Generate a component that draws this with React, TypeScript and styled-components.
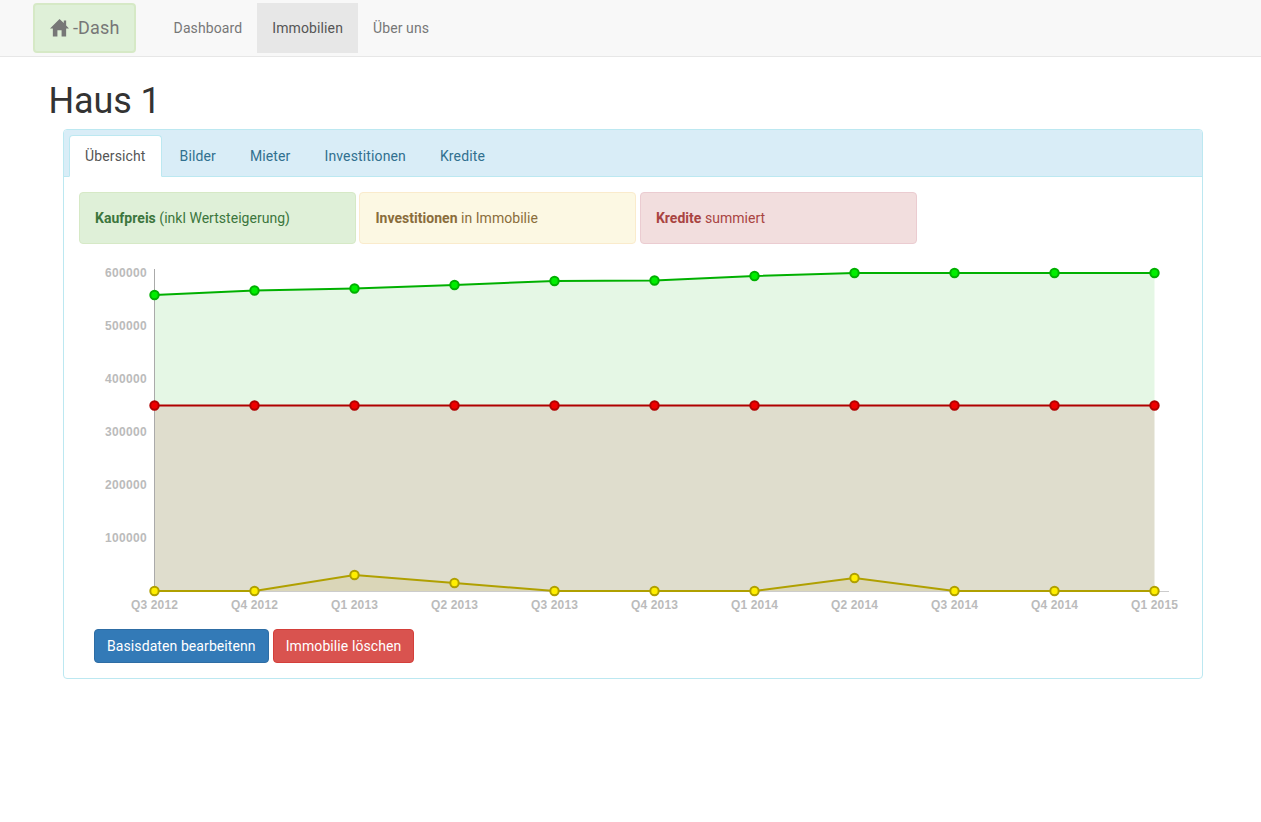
import React from 'react';
import styled, { createGlobalStyle } from 'styled-components';

const Global = createGlobalStyle`
  html, body { margin: 0; padding: 0; background: #fff; }
  body { font-family: Roboto, "Liberation Sans", sans-serif; font-size: 14px; line-height: 20px; color: #333; }
`;
const Navbar = styled.nav`
  box-sizing: border-box; height: 57px; background: #f8f8f8; border-bottom: 1px solid #e7e7e7;
  display: flex; align-items: flex-start; padding: 3px 0 0 33px;
`;
const Brand = styled.a`
  box-sizing: border-box; width: 103px; height: 50px; background: #dff0d8; border: 2px solid #d6e9c6; border-radius: 4px;
  display: flex; align-items: center; padding-left: 15px; color: #777; font-size: 18px; letter-spacing: 0.15px; margin-right: 22.6px;
  svg { margin-right: 4px; margin-top: -2px; flex: none; }
`;
const NavList = styled.div`display: flex;`;
const NavItem = styled.a<{ $active?: boolean }>`
  height: 50px; line-height: 50px; padding: 0 15px; letter-spacing: 0.11px; color: ${p => (p.$active ? '#555' : '#777')};
  background: ${p => (p.$active ? '#e7e7e7' : 'transparent')};
`;
const Main = styled.main`padding: 0 58px 0 49px;`;
const Title = styled.h1`
  font-size: 36px; font-weight: 400; line-height: 40px; color: #333; margin: 24px 0 8px -0.6px; letter-spacing: -0.1px;
`;
const Panel = styled.section`
  box-sizing: border-box; margin-left: 14px; height: 550px; border: 1px solid #bce8f1; border-radius: 4px; background: #fff;
`;
const TabBar = styled.div`
  height: 47px; box-sizing: border-box; background: #d9edf7; border-bottom: 1px solid #bce8f1; padding: 5px 0 0 5px;
  display: flex; border-radius: 3px 3px 0 0;
`;
const Tab = styled.a<{ $active?: boolean }>`
  box-sizing: border-box; height: 42px; line-height: 40px; padding: 0 15px; margin-right: 2px; border: 1px solid transparent;
  border-radius: 4px 4px 0 0; letter-spacing: 0.13px; color: ${p => (p.$active ? '#555' : '#31708f')};
  ${p => p.$active && 'background: #fff; border-color: #bce8f1 #bce8f1 #fff;'}
`;
const Body = styled.div`padding: 15px;`;
const Alerts = styled.div`display: flex; gap: 3.45px;`;
const Alert = styled.div<{ $bg: string; $bd: string; $fg: string }>`
  box-sizing: border-box; width: 277px; height: 52px; line-height: 50px; padding: 0 15px; border-radius: 4px;
  background: ${p => p.$bg}; border: 1px solid ${p => p.$bd}; color: ${p => p.$fg}; letter-spacing: 0.03px;
  b { font-weight: 700; }
`;
const Chart = styled.svg`
  display: block; margin: 0 0 0 -15px;
`;
const AxisText = styled.text<{ $spacing: number }>`
  font-family: "Liberation Sans", Arial, sans-serif; font-size: 12px; font-weight: 700; fill: #bbb; letter-spacing: ${p => p.$spacing}px;
`;
const Actions = styled.div`display: flex; gap: 4px; margin: 0 0 0 15px;`;
const Button = styled.button<{ $bg: string; $bd: string }>`
  box-sizing: border-box; height: 34px; padding: 0 12px; font: 14px Roboto, sans-serif; letter-spacing: 0.09px; color: #fff; border-radius: 4px;
  background: ${p => p.$bg}; border: 1px solid ${p => p.$bd};
`;

const X0 = 90.5;
const OY = 244;
const xs = Array.from({ length: 11 }, (_, i) => X0 + i * 100);
const green = [295, 290.5, 288.5, 285, 281, 280.5, 276, 273, 273, 273, 273];
const red = xs.map(() => 405.5);
const yellow = [591, 591, 575, 583, 591, 591, 591, 578, 591, 591, 591];
const BASE = 591 - OY;
const pts = (ys: number[]) => ys.map((y, i) => `${xs[i]},${y - OY}`).join(' ');
const area = (ys: number[]) => `${X0},${BASE} ${pts(ys)} ${xs[10]},${BASE}`;
const labels = ['Q3 2012', 'Q4 2012', 'Q1 2013', 'Q2 2013', 'Q3 2013', 'Q4 2013', 'Q1 2014', 'Q2 2014', 'Q3 2014', 'Q4 2014', 'Q1 2015'];
const ticks = [600000, 500000, 400000, 300000, 200000, 100000];

function Series({ ys, line, dot }: { ys: number[]; line: string; dot: string }) {
  return (
    <g>
      <polyline points={pts(ys)} fill="none" stroke={line} strokeWidth={2} />
      {ys.map((y, i) => (
        <circle key={i} cx={xs[i]} cy={y - OY} r={4.2} fill={dot} stroke={line} strokeWidth={2} />
      ))}
    </g>
  );
}

export default function App() {
  return (
    <>
      <Global />
      <Navbar>
        <Brand>
          <svg width="19" height="19" viewBox="0 0 20 19"><path fill="#777" d="M10 0.5 L14.5 4.7 V2 H17 V7.4 L20 10.5 H17 V19 H12.2 V12.5 H7.8 V19 H3 V10.5 H0 Z" /></svg>
          -Dash
        </Brand>
        <NavList>
          <NavItem>Dashboard</NavItem>
          <NavItem $active>Immobilien</NavItem>
          <NavItem>Über uns</NavItem>
        </NavList>
      </Navbar>
      <Main>
        <Title>Haus 1</Title>
        <Panel>
          <TabBar>
            <Tab $active>Übersicht</Tab>
            <Tab>Bilder</Tab>
            <Tab>Mieter</Tab>
            <Tab>Investitionen</Tab>
            <Tab>Kredite</Tab>
          </TabBar>
          <Body>
            <Alerts>
              <Alert $bg="#dff0d8" $bd="#d6e9c6" $fg="#3c763d"><b>Kaufpreis</b> (inkl Wertsteigerung)</Alert>
              <Alert $bg="#fcf8e3" $bd="#faebcc" $fg="#8a6d3b"><b>Investitionen</b> in Immobilie</Alert>
              <Alert $bg="#f2dede" $bd="#ebccd1" $fg="#a94442"><b>Kredite</b> summiert</Alert>
            </Alerts>
            <Chart width={1138} height={385} viewBox="0 0 1138 385">
              <polygon points={area(green)} fill="#00b000" fillOpacity={0.1} />
              <polygon points={area(red)} fill="#b00000" fillOpacity={0.1} />
              <polygon points={area(yellow)} fill="#b0a000" fillOpacity={0.1} />
              <line x1={X0} y1={25} x2={X0} y2={BASE} stroke="#aaa" />
              <line x1={X0} y1={BASE + 0.5} x2={1105} y2={BASE + 0.5} stroke="#ccc" />
              {ticks.map((t, i) => (
                <AxisText key={t} $spacing={0.33} x={83} y={273 - OY + 4 + i * 53} textAnchor="end">{t}</AxisText>
              ))}
              {labels.map((l, i) => (
                <AxisText key={l} $spacing={0.15} x={xs[i]} y={BASE + 18} textAnchor="middle">{l}</AxisText>
              ))}
              <Series ys={green} line="#00b000" dot="#00ee00" />
              <Series ys={red} line="#b00000" dot="#f00000" />
              <Series ys={yellow} line="#b0a000" dot="#ffee00" />
            </Chart>
            <Actions>
              <Button $bg="#337ab7" $bd="#2e6da4">Basisdaten bearbeitenn</Button>
              <Button $bg="#d9534f" $bd="#d43f3a">Immobilie löschen</Button>
            </Actions>
          </Body>
        </Panel>
      </Main>
    </>
  );
}
